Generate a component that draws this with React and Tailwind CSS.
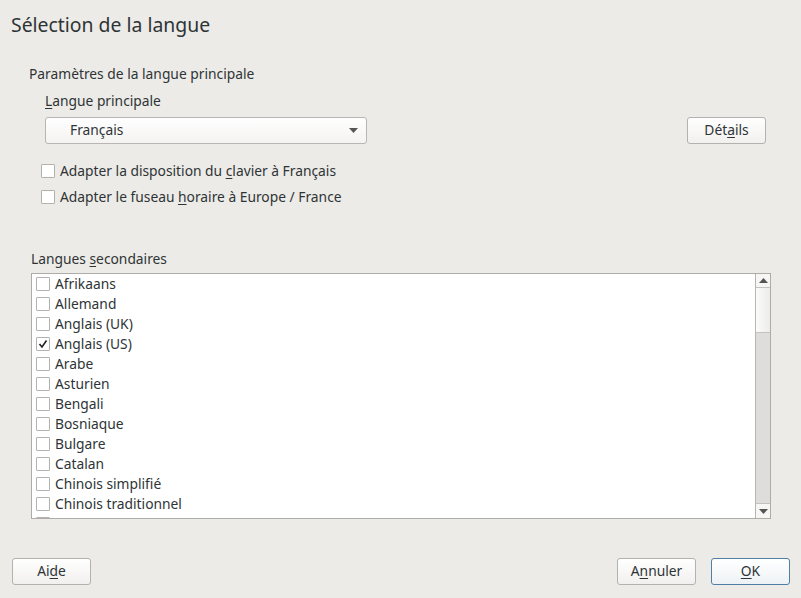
import React from 'react';

const langs = [
  { name: 'Afrikaans' },
  { name: 'Allemand' },
  { name: 'Anglais (UK)' },
  { name: 'Anglais (US)', checked: true },
  { name: 'Arabe' },
  { name: 'Asturien' },
  { name: 'Bengali' },
  { name: 'Bosniaque' },
  { name: 'Bulgare' },
  { name: 'Catalan' },
  { name: 'Chinois simplifié' },
  { name: 'Chinois traditionnel' },
];

const Box = ({ checked }) => (
  <span className="w-[14px] h-[14px] border border-[#b4b2ae] bg-white rounded-[1px] flex items-center justify-center shrink-0">
    {checked && (
      <svg width="10" height="10" viewBox="0 0 10 10">
        <path d="M1.5 5 L4 8 L8.5 1.5" fill="none" stroke="#222" strokeWidth="1.6" />
      </svg>
    )}
  </span>
);

const Btn = ({ children, className = '' }) => (
  <button
    className={`h-[27px] w-[79px] rounded-[3px] border bg-gradient-to-b text-[13.8px] text-[#2e3436] flex items-center justify-center ${className}`}
  >
    {children}
  </button>
);

export default function App() {
  return (
    <div
      className="w-[801px] h-[598px] bg-[#edebe7] text-[#2e3436] text-[13.8px] overflow-hidden flex flex-col"
      style={{ fontFamily: '"Noto Sans", "DejaVu Sans", sans-serif' }}
    >
      {/* Title */}
      <div className="pl-[11px] pt-[10px] h-[40px] text-[19.4px] leading-[30px]">Sélection de la langue</div>

      {/* Main language settings */}
      <div className="pl-[29px] mt-[24px] leading-[20px]">Paramètres de la langue principale</div>
      <div className="pl-[45px] mt-[7px] leading-[20px]">
        <span className="underline underline-offset-2">L</span>angue principale
      </div>
      <div className="flex items-center mt-[6px] pl-[45px] pr-[35px]">
        <div className="w-[322px] h-[27px] border border-[#b8b6b2] rounded-[3px] bg-gradient-to-b from-white to-[#f4f3f1] flex items-center justify-between pl-[24px] pr-[8px]">
          <span>Français</span>
          <svg width="9" height="5" viewBox="0 0 9 5">
            <path d="M0 0 L9 0 L4.5 5 Z" fill="#555" />
          </svg>
        </div>
        <div className="flex-1" />
        <Btn className="border-[#b4b2ae] from-white to-[#f1f0ee]">
          Dét<span className="underline underline-offset-2">a</span>ils
        </Btn>
      </div>

      <div className="pl-[41px] mt-[17px] flex flex-col gap-[6px]">
        <div className="flex items-center gap-[5px] h-[20px]">
          <Box />
          <span>
            Adapter la disposition du <span className="underline underline-offset-2">c</span>lavier à Français
          </span>
        </div>
        <div className="flex items-center gap-[5px] h-[20px]">
          <Box />
          <span>
            Adapter le fuseau <span className="underline underline-offset-2">h</span>oraire à Europe / France
          </span>
        </div>
      </div>

      {/* Secondary languages */}
      <div className="pl-[31px] mt-[42px] leading-[20px]">
        Langues <span className="underline underline-offset-2">s</span>econdaires
      </div>
      <div className="ml-[31px] mt-[4px] w-[740px] h-[246px] border border-[#aeaca8] bg-white flex overflow-hidden">
        <div className="flex-1 overflow-hidden">
          {langs.map((l) => (
            <div key={l.name} className="flex items-center gap-[5px] h-[20px] pl-[4px] leading-[20px]">
              <Box checked={l.checked} />
              <span>{l.name}</span>
            </div>
          ))}
          <div className="flex items-start h-[20px] pl-[4px] pt-[3px]">
            <Box />
          </div>
        </div>
        <div className="w-[15px] border-l border-[#b8b6b2] bg-[#dedddb] flex flex-col">
          <div className="h-[14px] bg-[#f6f6f5] border-b border-[#c4c2be] flex items-center justify-center">
            <svg width="9" height="5" viewBox="0 0 9 5">
              <path d="M0 5 L9 5 L4.5 0 Z" fill="#555" />
            </svg>
          </div>
          <div className="h-[45px] bg-gradient-to-r from-[#fbfbfb] to-[#ececea] border-b border-[#c4c2be]" />
          <div className="flex-1" />
          <div className="h-[15px] bg-[#f6f6f5] border-t border-[#c4c2be] flex items-center justify-center">
            <svg width="9" height="5" viewBox="0 0 9 5">
              <path d="M0 0 L9 0 L4.5 5 Z" fill="#555" />
            </svg>
          </div>
        </div>
      </div>

      {/* Bottom buttons */}
      <div className="flex items-center mt-[39px] pl-[12px] pr-[11px]">
        <Btn className="border-[#b4b2ae] from-white to-[#f1f0ee]">
          Ai<span className="underline underline-offset-2">d</span>e
        </Btn>
        <div className="flex-1" />
        <Btn className="border-[#b4b2ae] from-white to-[#f1f0ee]">
          A<span className="underline underline-offset-2">n</span>nuler
        </Btn>
        <Btn className="ml-[15px] border-[#4f7fa6] from-white to-[#eef2f5]">
          <span className="underline underline-offset-2">O</span>K
        </Btn>
      </div>
    </div>
  );
}
